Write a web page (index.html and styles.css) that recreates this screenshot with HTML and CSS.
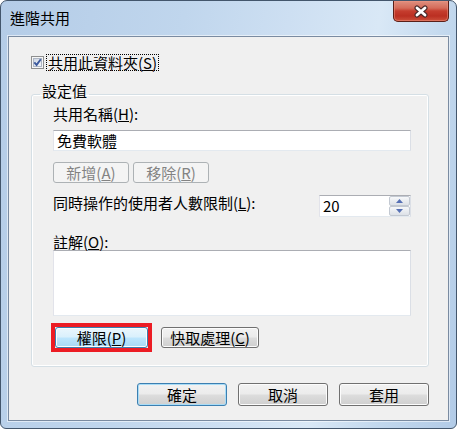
FILE: index.html
```html
<!DOCTYPE html>
<html lang="zh-Hant">
<head>
<meta charset="utf-8">
<title>進階共用</title>
<link rel="stylesheet" href="styles.css">
</head>
<body>
<div class="window">
  <div class="titlebar">
    <span class="title">進階共用</span>
    <div class="close" role="button" aria-label="關閉">
      <svg width="16" height="13" viewBox="0 0 16 13">
        <path d="M4 3 L12 10 M12 3 L4 10" stroke="#4a2a2a" stroke-width="5" stroke-linecap="round" fill="none"/>
        <path d="M4 3 L12 10 M12 3 L4 10" stroke="#ffffff" stroke-width="2.8" stroke-linecap="round" fill="none"/>
      </svg>
    </div>
  </div>
  <div class="client">
    <div class="share-row">
      <span class="checkbox">
        <svg width="13" height="13" viewBox="0 0 13 13">
          <defs>
            <linearGradient id="cbg" x1="0" y1="0" x2="1" y2="1">
              <stop offset="0" stop-color="#cbd4e2"/>
              <stop offset="1" stop-color="#f7f9fb"/>
            </linearGradient>
          </defs>
          <rect x="0.5" y="0.5" width="12" height="12" fill="#f6f6f6" stroke="#8e8f8f"/>
          <rect x="2.5" y="2.5" width="8" height="8" fill="url(#cbg)" stroke="#aeb6c4"/>
          <path d="M3.3 6.3 L5.6 8.9 L9.8 3.2" fill="none" stroke="#3d5a9e" stroke-width="1.9"/>
        </svg>
      </span>
      <span class="focus-label">共用此資料夾(<u>S</u>)</span>
    </div>

    <fieldset class="group">
      <legend>設定值</legend>
      <div class="label">共用名稱(<u>H</u>):</div>
      <div class="textbox name-box">免費軟體</div>
      <div class="btn-row name-buttons">
        <button class="btn disabled">新增(<u>A</u>)</button>
        <button class="btn disabled">移除(<u>R</u>)</button>
      </div>
      <div class="limit-row">
        <span class="label">同時操作的使用者人數限制(<u>L</u>):</span>
        <div class="spin">
          <span class="spin-value">20</span>
          <span class="spin-buttons">
            <span class="spin-btn">
              <svg width="7" height="4" viewBox="0 0 7 4"><path d="M0 4 L3.5 0 L7 4 Z" fill="#5670b4"/></svg>
            </span>
            <span class="spin-btn">
              <svg width="7" height="4" viewBox="0 0 7 4"><path d="M0 0 L3.5 4 L7 0 Z" fill="#5670b4"/></svg>
            </span>
          </span>
        </div>
      </div>
      <div class="label comment-label">註解(<u>O</u>):</div>
      <div class="textbox comment-box"></div>
      <div class="btn-row perm-buttons">
        <span class="mark">
          <button class="btn hot">權限(<u>P</u>)</button>
        </span>
        <button class="btn cache">快取處理(<u>C</u>)</button>
      </div>
    </fieldset>

    <div class="dialog-buttons">
      <button class="btn default">確定</button>
      <button class="btn">取消</button>
      <button class="btn">套用</button>
    </div>
  </div>
</div>
</body>
</html>
```

FILE: styles.css
```css
* {
  box-sizing: border-box;
}

html, body {
  margin: 0;
  padding: 0;
  background: #ffffff;
}

.window {
  width: 457px;
  height: 429px;
  border: 1px solid #43566c;
  border-radius: 7px 7px 6px 6px;
  background: linear-gradient(100deg, #b4cce7 0%, #c0d6ed 35%, #cddff2 55%, #d9e8f6 72%, #c1d7ed 86%, #b2cbe7 100%);
  padding: 0 7px 7px 7px;
  display: flex;
  flex-direction: column;
  overflow: hidden;
  font-family: "Noto Sans CJK TC", "Noto Sans", sans-serif;
  font-size: 15px;
  line-height: 16px;
  color: #000;
}

.titlebar {
  height: 35px;
  display: flex;
  justify-content: space-between;
  align-items: flex-start;
}

.title {
  padding-left: 2px;
  margin-top: 9px;
  font-size: 15px;
  line-height: 16px;
  color: #000;
}

.close {
  width: 56px;
  height: 21px;
  border: 1px solid #5a1f18;
  border-top: none;
  border-radius: 0 0 5px 5px;
  background-color: #c53d2e;
  background-image: linear-gradient(#df9080 0%, #d46c5a 35%, #c53d2e 50%, #bb2f22 75%, #cc503b 100%);
  box-shadow: inset 0 0 0 1px rgba(240, 150, 130, 0.5);
  display: flex;
  align-items: center;
  justify-content: center;
}

.close svg {
  display: block;
}

.client {
  flex: 1;
  background: #f0f0f0;
  border: 1px solid #7a8ba1;
  box-shadow: 0 0 0 1px rgba(255, 255, 255, 0.55);
  padding: 17px 19px 0 22px;
  display: flex;
  flex-direction: column;
}

.share-row {
  display: flex;
  align-items: center;
  height: 17px;
}

.checkbox {
  width: 13px;
  height: 13px;
  margin-right: 2px;
  display: block;
}

.checkbox svg {
  display: block;
}

.focus-label {
  border: 1px dotted #000;
  padding: 0 1px;
  height: 17px;
  line-height: 15px;
}

.group {
  margin: 12px 0 0 0;
  width: 398px;
  min-width: 0;
  border: 1px solid #d5dfe5;
  border-radius: 3px;
  box-shadow: inset 0 0 0 1px #ffffff;
  padding: 0 0 18px 21px;
}

.group legend {
  margin-left: -13px;
  padding: 0 2px 8px;
  line-height: 15px;
}

.label {
  line-height: 16px;
  white-space: nowrap;
}

.textbox {
  width: 358px;
  background: #ffffff;
  border: 1px solid #dbdfe6;
  border-top-color: #abadb3;
  border-left-color: #e2e3ea;
  border-bottom-color: #e3e9ef;
}

.name-box {
  margin-top: 8px;
  height: 21px;
  padding-left: 3px;
  line-height: 19px;
}

.btn-row {
  display: flex;
}

.name-buttons {
  margin-top: 11px;
  gap: 4px;
}

.btn {
  appearance: none;
  font-family: inherit;
  font-size: 15px;
  line-height: 16px;
  color: #000;
  padding: 0;
  margin: 0;
  border: 1px solid #707070;
  border-radius: 3px;
  background: linear-gradient(#f2f2f2 0%, #ebebeb 49%, #dddddd 51%, #cfcfcf 100%);
  box-shadow: inset 0 0 0 1px #fcfcfc;
  display: flex;
  align-items: center;
  justify-content: center;
}

.name-buttons .btn {
  width: 76px;
  height: 21px;
}

.btn.disabled {
  border-color: #adb2b5;
  background: #f4f4f4;
  box-shadow: none;
  color: #838383;
}

.limit-row {
  margin-top: 12px;
  width: 358px;
  display: flex;
  justify-content: space-between;
  align-items: flex-start;
}

.spin {
  width: 92px;
  height: 22px;
  background: #ffffff;
  border: 1px solid #dbdfe6;
  border-top-color: #abadb3;
  border-left-color: #e2e3ea;
  border-bottom-color: #e3e9ef;
  display: flex;
  justify-content: space-between;
}

.spin-value {
  padding-left: 3px;
  line-height: 20px;
}

.spin-buttons {
  width: 21px;
  display: flex;
  flex-direction: column;
}

.spin-btn {
  flex: 1;
  display: flex;
  align-items: center;
  justify-content: center;
  border: 1px solid #c3c9d2;
  border-radius: 2px;
  background: linear-gradient(#f7f8fa 0%, #e9ecf0 50%, #dde1e7 100%);
}

.spin-btn svg {
  display: block;
}

.comment-label {
  margin-top: 17px;
}

.comment-box {
  height: 66px;
}

.perm-buttons {
  margin-top: 11px;
  align-items: center;
}

.perm-buttons .btn {
  height: 21px;
}

.mark {
  display: block;
  border: 4px solid #ec1c24;
  margin: -4px 0 -4px -2px;
}

.btn.hot {
  width: 93px;
  border-color: #3c7fb1;
  background: linear-gradient(#eaf6fd 0%, #d9f0fc 49%, #bee6fd 51%, #a7d9f5 100%);
}

.btn.cache {
  width: 98px;
  margin-left: 9px;
}

.dialog-buttons {
  margin-top: 16px;
  display: flex;
  justify-content: flex-end;
  gap: 11px;
}

.dialog-buttons .btn {
  width: 90px;
  height: 23px;
}

.btn.default {
  border-color: #3c7fb1;
  box-shadow: inset 0 0 0 1px #a9dcf6;
}

u {
  text-decoration: underline;
  text-underline-offset: 1px;
}
```
